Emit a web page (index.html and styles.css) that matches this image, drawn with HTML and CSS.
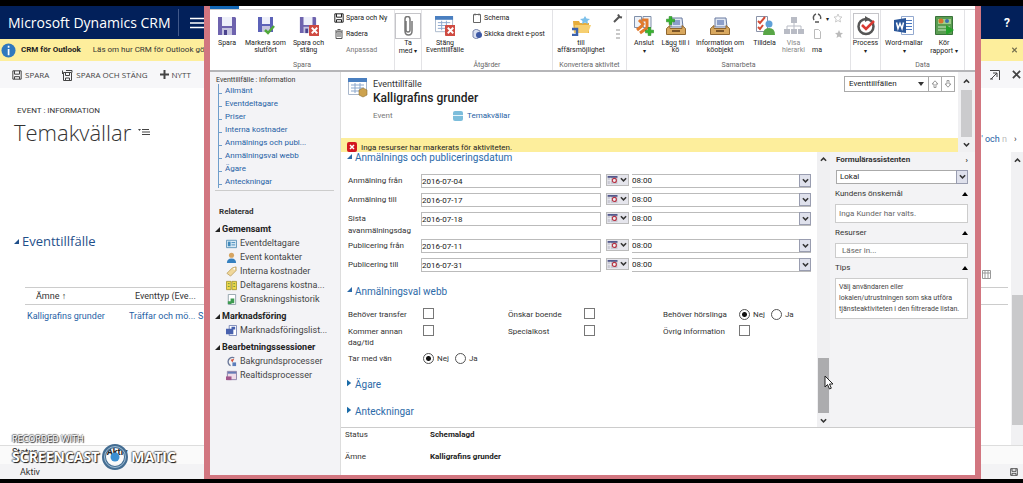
FILE: index.html
```html
<!DOCTYPE html>
<html lang="sv">
<head>
<meta charset="utf-8">
<title>Microsoft Dynamics CRM</title>
<link rel="stylesheet" href="styles.css">
</head>
<body>
<svg class="defs" aria-hidden="true">
  <symbol id="floppy" viewBox="0 0 20 20"><path fill="#6e63ae" d="M1 1h17l1 1v17H1z"/><path fill="#eef0fa" d="M5 1h10v9H5z"/><path fill="#c5c3df" d="M5 12h10v7H5z"/><path fill="#4b438e" d="M7 14h3v5H7z"/></symbol>
  <symbol id="redx" viewBox="0 0 12 12"><rect width="12" height="12" rx="1" fill="#cf4b42"/><path stroke="#fff" stroke-width="2" d="M3 3l6 6M9 3l-6 6"/></symbol>
  <symbol id="plus" viewBox="0 0 10 10"><path fill="#35b52c" stroke="#1f7e1c" stroke-width=".6" d="M3.500.5h3v3h3v3h-3v3h-3v-3h-3v-3h3z"/></symbol>
  <symbol id="calbtn" viewBox="0 0 12 9"><path fill="#c9c9d3" d="M0 0h11v9H0z"/><path fill="#53598c" d="M0 0h11v2H0z"/><path stroke="#fff" stroke-width=".6" d="M3 2v7M0 5h8"/><circle cx="7.500" cy="5" r="2.300" fill="#eee" stroke="#b93345" stroke-width="1.300"/></symbol>
  <symbol id="chev" viewBox="0 0 8 6"><path fill="none" stroke="currentColor" stroke-width="1.700" d="M1 1l3 3 3-3"/></symbol>
  <symbol id="tri" viewBox="0 0 6 6"><path fill="currentColor" d="M6 0v6H0z"/></symbol>
  <symbol id="right" viewBox="0 0 6 8"><path fill="currentColor" d="M0 0l5 4-5 4z"/></symbol>
  <symbol id="cal" viewBox="0 0 20 20"><path fill="#fff" stroke="#a9b7cb" d="M.5.5h18v16H.5z"/><path fill="#4a7fc0" d="M0 0h19v4H0z"/><path stroke="#8ba7cc" d="M3 7h13M3 10h13M3 13h13M7 5v10M12 5v10"/></symbol>
  <symbol id="tray" viewBox="0 0 20 20"><path fill="#dfe6f2" stroke="#6a7ba0" d="M5 2h11l1 9H5z"/><path fill="#8c9fca" d="M7 4h7v5H7z"/><path fill="#d9a85e" stroke="#8f6630" d="M.5 12.500 4 9.500v3h12v-3l3.500 3v6H.5z"/><path fill="#7b5527" d="M6 14h8v2H6z"/></symbol>
  <symbol id="savel" viewBox="0 0 12 12"><path fill="none" stroke="currentColor" stroke-width="1.200" d="M1 1h10v10H1zM3 1v4h6V1M3 11V8h6v3"/></symbol>
</svg>

<div class="app">
  <header class="topbar">
    <span class="brand">Microsoft Dynamics CRM</span>
    <button class="burger" aria-label="Meny"><svg viewBox="0 0 16 12"><path stroke="#fff" stroke-width="1.300" d="M0 1.500h16M0 6h16M0 10.500h16"/></svg></button>
    <button class="help">?</button>
  </header>
  <div class="notice">
    <svg class="info" viewBox="0 0 16 16"><circle cx="8" cy="8" r="7.500" fill="#2f78bd"/><path fill="#fff" d="M7.200 3h1.800v2H7.200zM7.200 6.500h1.800V13H7.200z"/></svg>
    <strong>CRM för Outlook</strong><span>Läs om hur CRM för Outlook gör</span>
    <button class="push" aria-label="Stäng"><svg class="s7" viewBox="0 0 8 8"><path stroke="#75704f" stroke-width="1.500" d="M1 1l6 6M7 1L1 7"/></svg></button>
  </div>
  <nav class="commands">
    <button><svg class="s10"><use href="#savel"/></svg>SPARA</button>
    <button><svg class="s12" viewBox="0 0 12 12"><path fill="none" stroke="currentColor" d="M2.500 3.500h8v8h-8zM4.500 3.500v3h4v-3M4.500 11V9h4v2M5 1.500h6v2M1.500 5V1.500"/></svg>SPARA OCH STÄNG</button>
    <button><svg class="s9" viewBox="0 0 10 10"><path stroke="currentColor" stroke-width="2.200" d="M5 0v10M0 5h10"/></svg>NYTT</button>
    <button class="push" aria-label="Öppna"><svg class="s10" viewBox="0 0 10 10"><path fill="none" stroke="currentColor" d="M0 .5h9.500V10M3 3h4v4M7 3L1 9M0 9h3"/></svg></button>
    <button aria-label="Stäng"><svg class="s9" viewBox="0 0 10 10"><path stroke="currentColor" stroke-width="2" d="M1 1l8 8M9 1L1 9"/></svg></button>
  </nav>
  <main class="record">
    <p class="entity">EVENT : INFORMATION</p>
    <div class="titleline"><h1>Temakvällar</h1><svg class="menuic" viewBox="0 0 12 8"><path fill="#444" d="M0 1h3L1.500 3z"/><path stroke="#444" d="M4 1.500h7M4 4h8M4 6.500h8"/></svg><span class="lookup">' och <i>n</i></span><span class="more">›</span></div>
    <h2><svg class="s5"><use href="#tri"/></svg>Eventtillfälle</h2>
    <svg class="gridic" viewBox="0 0 10 9"><path fill="#fff" stroke="#999" d="M.5.5h8v8h-8zM.5 3h8M3 1v8M6 1v8"/></svg>
    <table>
      <thead><tr><th class="c1">Ämne ↑</th><th class="c2">Eventtyp (Eve...</th><th></th></tr></thead>
      <tbody><tr><td><a href="#">Kalligrafins grunder</a></td><td><a href="#">Träffar och mö...</a></td><td><a href="#">S</a></td></tr></tbody>
    </table>
    <div class="pagescroll"><svg class="s7"><use href="#chev"/></svg><i></i></div>
  </main>
  <footer class="appfoot">
    <p class="st"><span>Status</span><b>Aktiv</b></p>
    <p class="state"><span>Aktiv</span><svg class="s8"><use href="#savel"/></svg></p>
  </footer>
</div>

<div class="watermark">
  <p>RECORDED WITH</p>
  <div><span>SCREENCAST</span><svg viewBox="0 0 26 26"><circle cx="13" cy="13" r="11" fill="none" stroke="#446d92" stroke-width="4"/><circle cx="13" cy="13" r="10.500" fill="none" stroke="#9fbdd5" stroke-width="1"/><circle cx="13" cy="13" r="4.500" fill="#3b8fd2"/></svg><span>MATIC</span></div>
</div>

<section class="window">
  <div class="tabs"><i></i></div>
  <div class="ribbon">
    <div class="group g-save">
      <div class="tools">
        <button class="big b34"><svg><use href="#floppy"/></svg>Spara</button>
        <button class="big b42"><svg viewBox="0 0 20 20"><path fill="#5c62b8" d="M2 1h15v15H2z"/><path fill="#eef0fa" d="M6 1h8v7H6z"/><path fill="#c5c3df" d="M6 10h8v6H6z"/><path fill="none" stroke="#50a83a" stroke-width="2.500" d="M9 14l3 3 6-7"/></svg>Markera som<br>slutfört</button>
        <button class="big b42"><svg viewBox="0 0 20 20"><use href="#floppy" width="18" height="18"/><use href="#redx" x="10" y="9" width="11" height="11"/></svg>Spara och<br>stäng</button>
        <div class="small">
          <button><svg class="s10"><use href="#savel"/></svg>Spara och Ny</button>
          <button><svg class="s10" viewBox="0 0 10 10"><path fill="none" stroke="#555" d="M2 3h6v6.500H2zM1 2h8M3.500.5h3M4 4v4M6 4v4"/></svg>Radera</button>
          <span>Anpassad</span>
        </div>
      </div>
      <p>Spara</p>
    </div>
    <div class="group g-with">
      <div class="tools"><button class="big b26 boxed"><svg viewBox="0 0 20 20"><path fill="none" stroke="#777" stroke-width="1.500" d="M8 5v9q0 2 2 2t2-2V3q0-2.500-2.500-2.500T7 3v12q0 4 3.500 4t3.500-4V5"/></svg>Ta<br><span>med <i>▾</i></span></button></div>
      <p></p>
    </div>
    <div class="group g-act">
      <div class="tools">
        <button class="big b46"><svg viewBox="0 0 20 20"><use href="#cal" width="19" height="19"/><use href="#redx" x="10" y="9" width="11" height="11"/></svg>Stäng<br>Eventtillfälle</button>
        <div class="small">
          <button><svg class="s10" viewBox="0 0 10 10"><path fill="#fff" stroke="#666" d="M1.500 1.500h7v8h-7zM3 .5v2M7 .5v2"/></svg>Schema</button>
          <button><svg class="s10" viewBox="0 0 10 10"><path fill="#d8dff0" stroke="#7a86ab" d="M1 2l3-2 4 2v6l-4 2-3-2z"/><circle cx="7" cy="6" r="3" fill="#3c58a5"/></svg>Skicka direkt e-post</button>
        </div>
      </div>
      <p>Åtgärder</p>
    </div>
    <div class="group g-conv">
      <div class="tools">
        <button class="big b56"><svg viewBox="0 0 20 20"><path fill="#e6ad3c" d="M2 5h6l1 2h9v10H3z"/><path fill="#f6cf70" d="M4 9h16l-3 8H3z"/><path fill="#7cc0ea" d="M14 0l1.500 2.500L19 3l-2.500 2 .5 3-3-1.500L11 8l.5-3L9 3l3.500-.5z"/><path fill="none" stroke="#3c63ad" stroke-width="2.500" d="M1 13h5v6H1"/></svg>till<br>affärsmöjlighet</button>
        <div class="small mini"><svg class="s10" viewBox="0 0 10 10"><path fill="none" stroke="#555" stroke-width="2" d="M1 9l5-5M5 1.500L6.500 4 9 4.500"/></svg><svg class="s10" viewBox="0 0 10 10"><path fill="#c9c9c9" d="M3 0h4v2H3zM3 4h4v2H3zM3 8h4v2H3z"/></svg></div>
      </div>
      <p>Konvertera aktivitet</p>
    </div>
    <div class="group g-team">
      <div class="tools">
        <button class="big b34"><svg viewBox="0 0 20 20"><path fill="#eef2f8" stroke="#8090aa" d="M.5.5h7v11h-7zM9 .5h8v11H9z"/><path fill="none" stroke="#e27a2c" stroke-width="3" d="M3 14l6-5M5 4l5 5M8 4h5v8l-7 5"/><use href="#plus" x="11" y="11" width="9" height="9"/></svg>Anslut<br><i>▾</i></button>
        <button class="big b30"><svg viewBox="0 0 20 20"><use href="#tray" width="20" height="20"/><use href="#plus" width="9" height="9"/></svg>Lägg till i<br>kö</button>
        <button class="big b60"><svg><use href="#tray"/></svg>Information om<br>köobjekt</button>
        <button class="big b30"><svg viewBox="0 0 20 20"><path fill="#fff" stroke="#8a93a8" d="M1.500.5h11v15h-11z"/><path fill="none" stroke="#d34a35" stroke-width="2" d="M3 5l2 2 5-6M3 11l2 2 3-4"/><circle cx="14" cy="8" r="3.500" fill="#5fa0d8"/><path fill="#58a646" d="M8 19q0-7 6-7t6 7z"/></svg>Tilldela</button>
        <button class="big b30 off"><svg viewBox="0 0 20 20"><path fill="#b9bcc5" d="M7 1h6v6H7zM0 13h6v5H0zM7 13h6v5H7zM14 13h6v5h-6z"/><path fill="none" stroke="#b9bcc5" d="M10 7v6M3 13v-3h14v3"/></svg>Visa<br>hierarki</button>
        <div class="small pair">
          <div><svg class="s10" viewBox="0 0 10 10"><path fill="none" stroke="#555" stroke-width="1.500" d="M2 7A4 4 0 0 1 4 1M6 1a4 4 0 0 1 2.500 5M7 9H3"/></svg><i>▾</i><svg class="s10" viewBox="0 0 10 10"><path fill="none" stroke="#ccc" d="M5 1l1.200 2.800L9 4 6.800 6l.7 3L5 7.500 2.500 9l.7-3L1 4l2.800-.2z"/></svg></div>
          <div class="wide"><svg class="s10" viewBox="0 0 10 10"><path fill="none" stroke="#bbb" d="M2.500.5h4l2 2v7h-6z"/></svg><svg class="s10" viewBox="0 0 10 10"><path fill="#bbb" d="M5 1l1.200 2.800L9 4 6.800 6l.7 3L5 7.500 2.500 9l.7-3L1 4l2.800-.2z"/></svg></div>
          <div>ma</div>
        </div>
      </div>
      <p>Samarbeta</p>
    </div>
    <div class="group g-proc">
      <div class="tools"><button class="big b30 boxed"><svg viewBox="0 0 20 20"><circle cx="10" cy="10.500" r="7.500" fill="none" stroke="#555" stroke-width="2.500"/><path fill="#555" d="M9 0l5 3-5 3z"/><path fill="none" stroke="#d93a32" stroke-width="2.500" d="M6 9l4 4 8-8"/></svg>Process<br><i>▾</i></button></div>
      <p></p>
    </div>
    <div class="group g-data">
      <div class="tools">
        <button class="big b46"><svg viewBox="0 0 20 20"><path fill="#fff" stroke="#93a9cf" d="M7.500.5h12v18h-12z"/><path stroke="#4a78c0" d="M12 4.500h6M12 7.500h6M12 10.500h6M12 13.500h6"/><path fill="#2b579a" d="M0 4l12-2v15L0 15z"/><path fill="none" stroke="#fff" stroke-width="1.500" d="M2.500 6.500l1.500 6 2-5 2 5 1.500-6"/></svg>Word-mallar<br><i>▾</i></button>
        <button class="big b34"><svg viewBox="0 0 20 20"><path fill="#5b9d52" stroke="#39733a" d="M1.500.5h17v18h-17z"/><path fill="#9fcf8a" d="M4 3h13v5H4z"/><circle cx="7" cy="5" r="2.500" fill="#d8732c"/><circle cx="13" cy="5" r="2" fill="#3c6db0"/><path stroke="#cfe8c6" d="M4 11h12M4 14h8"/><path fill="#25a32b" d="M12 9l8 5-8 5z"/></svg>Kör<br><span>rapport <i>▾</i></span></button>
      </div>
      <p>Data</p>
    </div>
  </div>

  <div class="body">
    <aside class="side">
      <p class="crumb">Eventtillfälle : Information</p>
      <ul class="tree">
        <li><a href="#">Allmänt</a></li><li><a href="#">Eventdeltagare</a></li><li><a href="#">Priser</a></li><li><a href="#">Interna kostnader</a></li><li><a href="#">Anmälnings och publ...</a></li><li><a href="#">Anmälningsval webb</a></li><li><a href="#">Ägare</a></li><li><a href="#">Anteckningar</a></li>
      </ul>
      <p class="rel">Relaterad</p>
      <h3><svg class="s5"><use href="#tri"/></svg>Gemensamt</h3>
      <ul class="links">
        <li><svg viewBox="0 0 12 12"><path fill="#d9eaf5" stroke="#5d93b8" d="M.5 2.500h11v8H.5z"/><path fill="#3f88ba" d="M2 4h3v5H2z"/><path stroke="#3f88ba" d="M6 5h4M6 7.500h4"/></svg>Eventdeltagare</li>
        <li><svg viewBox="0 0 12 12"><circle cx="6" cy="3.500" r="2.800" fill="#d6a563"/><path fill="#3580c0" d="M1 12q0-5 5-5t5 5z"/></svg>Event kontakter</li>
        <li><svg viewBox="0 0 12 12"><path fill="#f0d79a" stroke="#b39552" stroke-width=".8" d="M1 8l6-6 4-1v4l-6 6z"/><circle cx="9" cy="3" r="1" fill="#fff"/></svg>Interna kostnader</li>
        <li><svg viewBox="0 0 12 12"><path fill="#efd84c" stroke="#a99a38" d="M.5 1.500h5v9h-5zM6.500 1.500h5v9h-5z"/><path stroke="#5f8f3c" d="M2 4h2M8 4h2M2 7h2M8 7h2"/></svg>Deltagarens kostna...</li>
        <li><svg viewBox="0 0 12 12"><path fill="#fff" stroke="#8fa0a8" d="M2.500.5h8v11h-8z"/><path fill="#3e9b52" d="M5 5h4v5H5zM2 8h4v3H2z"/></svg>Granskningshistorik</li>
      </ul>
      <h3><svg class="s5"><use href="#tri"/></svg>Marknadsföring</h3>
      <ul class="links"><li><svg viewBox="0 0 12 12"><path fill="#fff" stroke="#7583b5" d="M3.500.5h8v11h-8z"/><path fill="#4861ae" d="M0 4h8v6H0zM6 2h4v3H6z"/></svg>Marknadsföringslist...</li></ul>
      <h3><svg class="s5"><use href="#tri"/></svg>Bearbetningssessioner</h3>
      <ul class="links">
        <li><svg viewBox="0 0 12 12"><path fill="none" stroke="#6b7899" stroke-width="1.500" d="M9 2A4.500 4.500 0 1 0 5 10.500"/><path fill="#d5553e" d="M5 4l4-1-2 4z"/><path fill="#5b7dbb" d="M7 7h4v4H7z"/></svg>Bakgrundsprocesser</li>
        <li><svg viewBox="0 0 12 12"><path fill="#eedbe8" stroke="#8a7fa5" d="M1.500 1.500h10v9h-10z"/><path fill="#a2568c" d="M0 7h6v4H0z"/><path stroke="#667bb5" stroke-width="2" d="M2 3h9"/></svg>Realtidsprocesser</li>
      </ul>
    </aside>

    <div class="main">
      <div class="head">
        <div class="headbody">
          <div class="headtop">
            <svg class="recic" viewBox="0 0 20 20"><use href="#cal" width="20" height="20"/><path fill="#cda24e" stroke="#8c6e35" stroke-width=".6" d="M11 12l4-2 4 2v5l-4 2-4-2z"/></svg>
            <div class="names">
              <p>Eventtillfälle</p>
              <h2>Kalligrafins grunder</h2>
              <p class="parent"><span>Event</span><a href="#"><svg class="s10" viewBox="0 0 10 10"><rect width="10" height="10" rx="2" fill="#7cbddb"/><path stroke="#e6f4fa" d="M0 4.500h10"/></svg>Temakvällar</a></p>
            </div>
            <div class="picker"><select aria-label="Vy"><option>Eventtillfällen</option></select><svg class="drop" viewBox="0 0 6 4"><path fill="#333" d="M0 0h6L3 4z"/></svg><button aria-label="Upp"><svg class="s8" viewBox="0 0 8 8"><path fill="#fff" stroke="#999" d="M4 .8L7 4H5v3.500H3V4H1z"/></svg></button><button aria-label="Ned"><svg class="s8" viewBox="0 0 8 8"><path fill="#fff" stroke="#999" d="M4 7.200L7 4H5V.5H3V4H1z"/></svg></button></div>
          </div>
          <div class="alert"><svg class="s10"><rect width="10" height="10" rx="2" fill="#d3161f"/><path stroke="#fff" stroke-width="1.500" d="M3 3l4 4M7 3L3 7"/></svg>Inga resurser har markerats för aktiviteten.</div>
        </div>
        <div class="scroll top"><svg class="s7 up"><use href="#chev"/></svg><i></i><svg class="s7"><use href="#chev"/></svg></div>
      </div>

      <div class="mid">
        <form class="form">
          <h3 class="first"><svg class="s5"><use href="#tri"/></svg>Anmälnings och publiceringsdatum</h3>
          <div class="row"><label for="d1">Anmälning från</label><input id="d1" value="2016-07-04"><button type="button" class="cal" aria-label="Kalender"><svg><use href="#calbtn"/></svg><svg class="s7"><use href="#chev"/></svg></button><div class="time"><select aria-label="Tid"><option>08:00</option></select><span><svg class="s7"><use href="#chev"/></svg></span></div></div>
          <div class="row"><label for="d2">Anmälning till</label><input id="d2" value="2016-07-17"><button type="button" class="cal" aria-label="Kalender"><svg><use href="#calbtn"/></svg><svg class="s7"><use href="#chev"/></svg></button><div class="time"><select aria-label="Tid"><option>08:00</option></select><span><svg class="s7"><use href="#chev"/></svg></span></div></div>
          <div class="row tall"><label for="d3">Sista avanmälningsdag</label><input id="d3" value="2016-07-18"><button type="button" class="cal" aria-label="Kalender"><svg><use href="#calbtn"/></svg><svg class="s7"><use href="#chev"/></svg></button><div class="time"><select aria-label="Tid"><option>08:00</option></select><span><svg class="s7"><use href="#chev"/></svg></span></div></div>
          <div class="row"><label for="d4">Publicering från</label><input id="d4" value="2016-07-11"><button type="button" class="cal" aria-label="Kalender"><svg><use href="#calbtn"/></svg><svg class="s7"><use href="#chev"/></svg></button><div class="time"><select aria-label="Tid"><option>08:00</option></select><span><svg class="s7"><use href="#chev"/></svg></span></div></div>
          <div class="row"><label for="d5">Publicering till</label><input id="d5" value="2016-07-31"><button type="button" class="cal" aria-label="Kalender"><svg><use href="#calbtn"/></svg><svg class="s7"><use href="#chev"/></svg></button><div class="time"><select aria-label="Tid"><option>08:00</option></select><span><svg class="s7"><use href="#chev"/></svg></span></div></div>

          <h3 class="second"><svg class="s5"><use href="#tri"/></svg>Anmälningsval webb</h3>
          <div class="opts">
            <label for="c1">Behöver transfer</label><input id="c1" type="checkbox">
            <label for="c2">Önskar boende</label><input id="c2" type="checkbox">
            <span>Behöver hörslinga</span><div class="radios"><input id="r1" type="radio" name="h" checked><label for="r1">Nej</label><input id="r2" type="radio" name="h"><label for="r2">Ja</label></div>
            <label for="c3">Kommer annan dag/tid</label><input id="c3" type="checkbox">
            <label for="c4">Specialkost</label><input id="c4" type="checkbox">
            <label for="c5">Övrig information</label><input id="c5" type="checkbox">
            <span>Tar med vän</span><div class="radios"><input id="r3" type="radio" name="v" checked><label for="r3">Nej</label><input id="r4" type="radio" name="v"><label for="r4">Ja</label></div>
          </div>
          <h3 class="closed"><svg class="s8"><use href="#right"/></svg>Ägare</h3>
          <h3 class="closed"><svg class="s8"><use href="#right"/></svg>Anteckningar</h3>
        </form>
        <div class="scroll"><svg class="s7 up"><use href="#chev"/></svg><i></i><svg class="s7"><use href="#chev"/></svg></div>
        <aside class="assist">
          <h4>Formulärassistenten<span>›</span></h4>
          <div class="pick"><select aria-label="Resurstyp"><option>Lokal</option></select><span><svg class="s7"><use href="#chev"/></svg></span></div>
          <p class="cap">Kundens önskemål<svg viewBox="0 0 6 4"><path d="M0 4h6L3 0z"/></svg></p>
          <div class="box">Inga Kunder har valts.</div>
          <p class="cap">Resurser<svg viewBox="0 0 6 4"><path d="M0 4h6L3 0z"/></svg></p>
          <div class="box load">Läser in...</div>
          <p class="cap">Tips<svg viewBox="0 0 6 4"><path d="M0 4h6L3 0z"/></svg></p>
          <div class="box tip">Välj användaren eller<br>lokalen/utrustningen som ska utföra<br>tjänsteaktiviteten i den filtrerade listan.</div>
        </aside>
      </div>
      <dl class="foot"><dt>Status</dt><dd>Schemalagd</dd><dt>Ämne</dt><dd>Kalligrafins grunder</dd></dl>
    </div>
  </div>
  <svg class="cursor" viewBox="0 0 10 15"><path fill="#fff" stroke="#222" d="M1 1v11l2.500-2.500L5.500 14l1.800-.8L5.500 9H9z"/></svg>
</section>
</body>
</html>
```
FILE: styles.css
```css
* { box-sizing: border-box; }
body { margin: 0; height: 100vh; padding: 6px 0 4px; background: #000; color: #333; font: 8px/12px Roboto, "Noto Sans", sans-serif; overflow: hidden; position: relative; }
h1, h2, h3, h4, p, ul, dl, dd { margin: 0; padding: 0; font-weight: 400; }
ul { list-style: none; }
button { border: 0; background: none; padding: 0; margin: 0; font: inherit; color: inherit; }
input, select { font: inherit; color: #222; margin: 0; border-radius: 0; }
select { appearance: none; }
a { color: #1f5fa5; text-decoration: none; }
svg { display: block; flex: none; }
.defs { display: none; }
.s5 { width: 5px; height: 5px; }
.s7 { width: 7px; height: 6px; }
.s8 { width: 8px; height: 8px; }
.s9 { width: 9px; height: 9px; }
.s10 { width: 10px; height: 10px; }
.s12 { width: 12px; height: 12px; }
.up { transform: rotate(180deg); }
.push { margin-left: auto; }

.app { height: 100%; display: flex; flex-direction: column; background: #fff; font-size: 9px; }
.topbar { height: 33px; display: flex; align-items: center; background: #02205a; color: #fff; padding-left: 8px; }
.brand { font: 14px/20px "Open Sans", sans-serif; width: 170px; white-space: nowrap; }
.burger { border-left: 1px solid #40588a; padding-left: 11px; height: 27px; }
.burger svg { width: 16px; height: 12px; }
.help { margin-left: auto; width: 32px; font-size: 12px; font-weight: 700; }
.notice { height: 22px; display: flex; align-items: center; background: #fdee9c; padding: 0 5px 0 1px; white-space: nowrap; font-size: 8px; }
.notice strong { margin: 0 12px 0 5px; color: #222; }
.info { width: 15px; height: 15px; }
.commands { height: 27px; display: flex; align-items: center; gap: 12px; background: #f7f7f9; padding: 0 2px 0 12px; color: #444; font: 8px/12px "Open Sans", sans-serif; }
.commands button { display: flex; align-items: center; gap: 3px; }
.record { flex: 1; position: relative; padding: 17px 0 0 14px; }
.entity { margin-left: 3px; font-size: 8px; }
.titleline { display: flex; align-items: center; height: 30px; }
.titleline h1 { font: 300 22px/30px "Open Sans", sans-serif; }
.menuic { width: 12px; height: 8px; margin-left: 7px; }
.lookup { margin: 14px 0 0 auto; color: #1f5fa5; }
.lookup i { color: #bbb; font-style: normal; margin-right: 7px; }
.more { width: 9px; margin-top: 14px; }
.record h2 { display: flex; align-items: center; gap: 3px; color: #1f4f8a; font: 13px/20px "Open Sans", sans-serif; margin-top: 84px; }
.gridic { width: 10px; height: 9px; margin: 19px 31px 8px auto; }
.record table { border-collapse: collapse; width: calc(100% - 26px); margin-left: 11px; table-layout: fixed; }
.record tr { height: 17px; }
.record th { border: solid #ccc; border-width: 1px 0; font-weight: 400; text-align: left; padding: 0 0 0 11px; }
.record td { height: 22px; padding: 0 0 0 2px; white-space: nowrap; }
.record th.c2 { padding-left: 8px; }
.c1 { width: 102px; }
.c2 { width: 69px; white-space: nowrap; }
.pagescroll { position: absolute; right: 0; top: 64px; bottom: 0; width: 12px; background: #f1f1f3; display: flex; flex-direction: column; align-items: center; padding-top: 5px; }
.pagescroll svg { transform: rotate(180deg); }
.pagescroll i { width: 11px; height: 130px; margin-top: 132px; background: #c9c9cb; }
.appfoot { height: 34px; border-top: 1px solid #ddd; background: #fafafa; }
.st { display: flex; height: 18px; padding-left: 12px; color: #222; }
.st b { margin-left: 69px; }
.state { display: flex; height: 15px; align-items: center; justify-content: space-between; padding: 0 5px 0 20px; background: #f3f3f5; }

.watermark { position: absolute; left: 12px; top: 432px; color: #fff; font: 700 9px/14px "Open Sans", sans-serif; text-shadow: 1px 1px 1px #111, -1px 0 1px #777, 0 -1px 1px #777; }
.watermark div { display: flex; align-items: center; gap: 3px; height: 22px; font-size: 14px; }
.watermark svg { width: 26px; height: 26px; }

.window { position: absolute; left: 204px; right: 42px; top: 6px; bottom: 4px; border: solid #d27680; border-width: 0 6px 4px; background: #fff; display: flex; flex-direction: column; }
.tabs { height: 4px; border-bottom: 1px solid #ccc; }
.tabs i { display: block; width: 29px; height: 3px; background: #1267b5; }
.ribbon { display: flex; height: 62px; border-bottom: 2px solid #b5b5b8; color: #222; font-size: 7px; line-height: 7px; }
.ribbon i { font-size: 6px; font-style: normal; }
.group { display: flex; flex-direction: column; justify-content: space-between; border-right: 1px solid #e3e3e6; white-space: nowrap; }
.group p { text-align: center; color: #666; line-height: 10px; height: 10px; }
.tools { display: flex; padding-top: 3px; }
.g-save { width: 185px; } .g-with { width: 27px; } .g-act { width: 131px; } .g-conv { width: 74px; }
.g-team { width: 224px; } .g-proc { width: 30px; } .g-data { width: 84px; }
.big { display: flex; flex-direction: column; align-items: center; text-align: center; line-height: 7px; flex: none; }
.big svg { width: 20px; height: 20px; margin: 3px 0 4px; }
.boxed svg { outline: 1px solid #c5c5c9; outline-offset: 2px; }
.b26 { width: 26px; } .b30 { width: 29px; } .b34 { width: 34px; } .b42 { width: 43px; } .b46 { width: 46px; } .b56 { width: 56px; } .b60 { width: 60px; }
.off { color: #888; }
.small { display: flex; flex-direction: column; gap: 6px; padding-left: 4px; }
.small button { display: flex; align-items: center; gap: 2px; height: 10px; }
.small > span { padding-left: 12px; color: #777; line-height: 10px; }
.pair div { display: flex; gap: 4px; align-items: center; height: 10px; }
.pair .wide { gap: 12px; }

.body { flex: 1; display: flex; min-height: 0; }
.side { width: 131px; flex: none; background: #f3f3f6; border-right: 1px solid #ddd; padding: 2px 6px 0 5px; white-space: nowrap; }
.crumb { padding-left: 1px; height: 10px; font-size: 7px; }
.tree { margin-left: 3px; padding-bottom: 2px; }
.tree li { height: 13px; line-height: 13px; border-left: 1px solid #6f9ecb; display: flex; gap: 3px; }
.tree li::before { content: ""; width: 3px; height: 9px; border-bottom: 1px solid #6f9ecb; }
.rel { border-top: 1px solid #ccc; font-weight: 700; padding: 15px 0 1px 4px; }
.side h3 { display: flex; align-items: center; gap: 2px; font-size: 9px; line-height: 14px; margin-top: 3px; font-weight: 700; color: #222; }
.links { padding-left: 11px; font-size: 9px; }
.links li { display: flex; align-items: center; gap: 3px; height: 14px; color: #444; }
.links svg { width: 11px; height: 11px; }

.main { flex: 1; min-width: 0; display: flex; flex-direction: column; }
.head { height: 80px; display: flex; }
.headbody { flex: 1; display: flex; flex-direction: column; justify-content: space-between; }
.headtop { display: flex; padding: 6px 3px 0 7px; }
.recic { width: 20px; height: 20px; }
.names { flex: 1; padding-left: 5px; }
.names p { font-size: 9px; }
.names h2 { font-size: 12px; line-height: 16px; font-weight: 500; color: #222; }
.names .parent { display: flex; margin-top: 4px; font-size: 8px; color: #777; }
.parent span { width: 80px; }
.parent a { display: flex; align-items: center; gap: 4px; }
.picker { display: flex; border: 1px solid #aaa; height: 16px; position: relative; margin-top: -2px; }
.picker select { width: 83px; border: 0; background: #fff; padding: 0 4px; }
.drop { position: absolute; left: 73px; top: 5px; width: 6px; height: 4px; pointer-events: none; }
.picker button { width: 13px; border-left: 1px solid #aaa; padding-left: 2px; }
.alert { height: 14px; background: #fdee9c; display: flex; gap: 4px; padding: 4px 0 0 6px; color: #222; }
.scroll { width: 13px; background: #f0f0f2; display: flex; flex-direction: column; align-items: center; justify-content: space-between; padding: 4px 0 3px; }
.scroll i { width: 11px; height: 55px; margin-top: auto; margin-bottom: 5px; background: #acacae; }
.scroll.top { width: 17px; padding: 6px 0 4px; }
.scroll.top i { height: 47px; margin: 0; background: #cbcbcd; }
.mid { flex: 1; display: flex; min-height: 0; }
.form { flex: 1; min-width: 0; padding: 0 6px 0 6px; }
.form h3 { display: flex; gap: 3px; color: #2c6aa8; font-size: 10px; line-height: 14px; }
.form h3 svg { margin-top: 2px; }
.form .first { line-height: 12px; margin-bottom: 10px; }
.row { display: grid; grid-template-columns: 73px 180px 23px 1fr; margin: 0 0 5px 1px; align-items: start; }
.row > label { line-height: 12px; padding-top: 1px; }
.row input { height: 14px; border: 1px solid #bbb; padding: 0; min-width: 0; }
.tall { margin-bottom: 2px; }
.cal { display: flex; align-items: center; gap: 1px; margin-left: 5px; width: 23px; height: 12px; background: #e5e5ec; border: 1px solid #bbb; }
.cal svg:first-child { width: 12px; height: 8px; }
.row .time { margin-left: 8px; }
.time, .pick { display: flex; height: 14px; position: relative; }
.time select { width: 100%; border: solid #bbb; border-width: 1px 0; background: #fff; padding: 0; }
.time span, .pick span { position: absolute; right: 0; top: 0; width: 12px; height: 13px; background: #dfe1ec; border: 1px solid #999db0; display: grid; place-items: center; pointer-events: none; }
.form .second { margin: 13px 0 9px; }
.opts { display: grid; grid-template-columns: 75px 85px 76px 79px 76px 1fr; margin-left: 1px; align-items: start; row-gap: 4px; line-height: 11px; }
.opts > label, .opts > span { padding-top: 1px; }
input[type=checkbox] { appearance: none; width: 11px; height: 11px; border: 1px solid #777; background: #fff; }
.radios { display: flex; align-items: center; gap: 3px; height: 13px; }
input[type=radio] { appearance: none; width: 11px; height: 11px; border: 1px solid #555; border-radius: 50%; background: #fff; }
input[type=radio]:checked { background: radial-gradient(#111 0 2px, #fff 3px); }
.radios label { margin-right: 3px; }
.form .closed { margin-top: 13px; }
.form .closed svg { margin-top: 1px; width: 5px; }
.closed svg { color: #1a6ba8; }
.assist { width: 145px; background: #f3f3f5; padding: 1px 7px 0 5px; }
.assist h4 { font-weight: 700; line-height: 14px; display: flex; justify-content: space-between; padding-left: 1px; }
.pick { margin: 3px 0 0 1px; }
.pick select { width: 100%; background: #fff; border: 1px solid #aaa; padding: 0 3px; }
.pick span { height: 14px; }
.cap { display: flex; justify-content: space-between; align-items: center; height: 20px; }
.cap svg { width: 6px; height: 4px; }
.box { background: #fff; border: 1px solid #ccc; padding: 3px 3px; line-height: 11px; color: #666; white-space: nowrap; }
.load { padding: 1px 6px; }
.tip { font-size: 7px; color: #444; }
.foot { height: 48px; border-top: 1px solid #ccc; padding: 1px 4px; display: grid; grid-template-columns: 85px 1fr; grid-auto-rows: 22px; line-height: 12px; }
.foot dd { font-weight: 700; color: #222; }
.cursor { position: absolute; left: 614px; top: 369px; width: 10px; height: 15px; }
```
